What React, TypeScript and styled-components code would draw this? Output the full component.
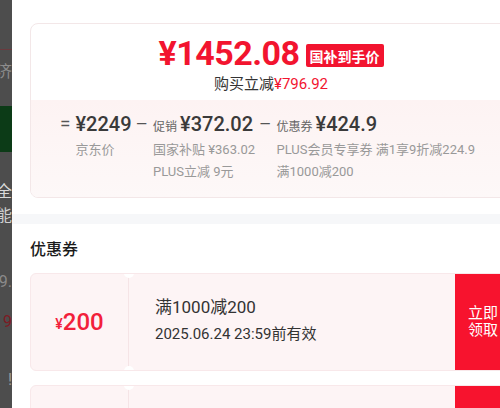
import styled, { createGlobalStyle } from 'styled-components';

const GlobalStyle = createGlobalStyle`
  html, body {
    margin: 0;
    padding: 0;
    background: #ffffff;
    overflow: hidden;
  }
  body {
    font-family: Roboto, "Noto Sans CJK SC", sans-serif;
    color: #333333;
  }
`;

const Screen = styled.div`
  display: flex;
  width: 530px;
  height: 408px;
  overflow: hidden;
`;

/* dimmed product page peeking out behind the sheet */
const Backdrop = styled.div`
  width: 12px;
  flex: none;
  background: #4d4d4d;
  display: flex;
  flex-direction: column;
  overflow: hidden;
`;

const BackRow = styled.div<{ h: number; bg?: string; color?: string; line?: string }>`
  height: ${(p) => p.h}px;
  flex: none;
  display: flex;
  align-items: center;
  justify-content: flex-end;
  background: ${(p) => p.bg || 'transparent'};
  border-bottom: ${(p) => (p.line ? `1px solid ${p.line}` : 'none')};
  color: ${(p) => p.color || '#9a9a9a'};
  font-size: 16px;
  white-space: nowrap;
  overflow: hidden;
`;

const Sheet = styled.div`
  flex: 1;
  min-width: 0;
  background: #ffffff;
  padding-top: 23px;
  display: flex;
  flex-direction: column;

  & > * {
    flex-shrink: 0;
  }
`;

const PriceCard = styled.div`
  margin: 0 18px;
  border: 1px solid #f3e7e8;
  border-radius: 8px;
  overflow: hidden;
`;

const PriceTop = styled.div`
  padding: 9px 0 6px;
  display: flex;
  flex-direction: column;
  align-items: center;
`;

const PriceLine = styled.div`
  display: flex;
  align-items: center;
  height: 40px;
  gap: 6px;
`;

const BigPrice = styled.span`
  font-size: 34px;
  line-height: 40px;
  font-weight: 700;
  color: #f2142f;
  letter-spacing: -0.5px;
`;

const Badge = styled.span`
  margin-top: 5px;
  height: 23px;
  padding: 0 4px;
  display: flex;
  align-items: center;
  border-radius: 2px;
  background: #f2142f;
  color: #ffffff;
  font-size: 14px;
  font-weight: 700;
`;

const SaveLine = styled.div`
  margin-top: 1px;
  font-size: 15px;
  line-height: 20px;
  color: #333333;
`;

const Red = styled.span`
  color: #f2142f;
`;

const Breakdown = styled.div`
  padding: 11px 0 14px 29px;
  display: flex;
  gap: 4px;
  background: linear-gradient(180deg, #fdf3f3 0%, #fdf8f8 100%);
`;

const Col = styled.div`
  display: grid;
  grid-template-columns: auto auto;
  column-gap: 5px;
  align-content: start;
`;

const Op = styled.span`
  font-size: 19px;
  line-height: 26px;
  color: #555555;
`;

const ColBody = styled.div`
  display: flex;
  flex-direction: column;
`;

const ColTitle = styled.div`
  display: flex;
  align-items: baseline;
  gap: 3px;
  height: 28px;
  line-height: 26px;
  font-size: 20px;
  font-weight: 500;
  color: #3a3a3a;
  white-space: nowrap;
`;

const TitleTag = styled.span`
  font-size: 12px;
  font-weight: 400;
  color: #666666;
`;

const Sub = styled.div`
  font-size: 13px;
  line-height: 22px;
  color: #999999;
  white-space: nowrap;
`;

const Band = styled.div`
  margin-top: 16px;
  height: 10px;
  background: #f6f7f9;
`;

const SectionTitle = styled.div`
  padding: 15px 18px 0;
  font-size: 16px;
  line-height: 22px;
  font-weight: 500;
  color: #1a1a1a;
`;

const CouponList = styled.div`
  margin-top: 12px;
  padding: 0 18px;
  display: flex;
  flex-direction: column;
  gap: 14px;
`;

const Coupon = styled.div`
  display: flex;
  height: 96px;
  flex: none;
  border: 1px solid #f8e8ea;
  border-radius: 6px;
  background: #fdf4f5;
  overflow: hidden;
`;

const Stub = styled.div`
  position: relative;
  width: 97px;
  flex: none;
  display: flex;
  align-items: center;
  justify-content: center;
  border-right: 1px solid #f5e4e6;
  color: #f2203a;

  &::before,
  &::after {
    content: '';
    position: absolute;
    right: -6px;
    width: 10px;
    height: 10px;
    border-radius: 50%;
    background: #ffffff;
  }
  &::before {
    top: -6px;
  }
  &::after {
    bottom: -6px;
  }
`;

const Yen = styled.span`
  font-size: 14px;
  font-weight: 500;
  margin-top: 4px;
`;

const Amount = styled.span`
  font-size: 24px;
  font-weight: 500;
`;

const CouponInfo = styled.div`
  flex: 1;
  padding: 21px 0 0 26px;
  display: flex;
  flex-direction: column;
  gap: 4px;
`;

const Cond = styled.div`
  font-size: 17px;
  line-height: 24px;
  color: #333333;
`;

const Expire = styled.div`
  font-size: 15px;
  line-height: 22px;
  color: #333333;
`;

const TakeButton = styled.button`
  width: 56px;
  flex: none;
  border: none;
  padding: 0;
  background: #f7132e;
  color: #ffffff;
  font-family: inherit;
  font-size: 15px;
  line-height: 17px;
  display: flex;
  align-items: center;
  justify-content: center;
  text-align: center;
`;

const breakdown = [
  { op: '=', tag: '', value: '¥2249', subs: ['京东价'] },
  { op: '–', tag: '促销', value: '¥372.02', subs: ['国家补贴 ¥363.02', 'PLUS立减 9元'] },
  { op: '–', tag: '优惠券', value: '¥424.9', subs: ['PLUS会员专享券 满1享9折减224.9', '满1000减200'] },
];

const coupons = [
  { amount: '200', cond: '满1000减200', expire: '2025.06.24 23:59前有效' },
  { amount: '100', cond: '满500减100', expire: '2025.06.24 23:59前有效' },
];

export default function App() {
  return (
    <>
      <GlobalStyle />
      <Screen>
        <Backdrop>
          <BackRow h={49} line="#6a3a3e" />
          <BackRow h={40} color="#8c8c8c">济</BackRow>
          <BackRow h={16} />
          <BackRow h={46} bg="#0c3b17" />
          <BackRow h={26} />
          <BackRow h={24} color="#d9d9d9">全</BackRow>
          <BackRow h={24} color="#cfcfcf">能</BackRow>
          <BackRow h={44} />
          <BackRow h={22} color="#8a8a8a">9.</BackRow>
          <BackRow h={18} />
          <BackRow h={22} color="#7d1b24">9</BackRow>
          <BackRow h={36} />
          <BackRow h={22} color="#9a9a9a">!</BackRow>
        </Backdrop>
        <Sheet>
          <PriceCard>
            <PriceTop>
              <PriceLine>
                <BigPrice>¥1452.08</BigPrice>
                <Badge>国补到手价</Badge>
              </PriceLine>
              <SaveLine>
                购买立减<Red>¥796.92</Red>
              </SaveLine>
            </PriceTop>
            <Breakdown>
              {breakdown.map((c, i) => (
                <Col key={i}>
                  <Op>{c.op}</Op>
                  <ColBody>
                    <ColTitle>
                      {c.tag && <TitleTag>{c.tag}</TitleTag>}
                      {c.value}
                    </ColTitle>
                    {c.subs.map((s) => (
                      <Sub key={s}>{s}</Sub>
                    ))}
                  </ColBody>
                </Col>
              ))}
            </Breakdown>
          </PriceCard>
          <Band />
          <SectionTitle>优惠券</SectionTitle>
          <CouponList>
            {coupons.map((c) => (
              <Coupon key={c.cond}>
                <Stub>
                  <Yen>¥</Yen>
                  <Amount>{c.amount}</Amount>
                </Stub>
                <CouponInfo>
                  <Cond>{c.cond}</Cond>
                  <Expire>{c.expire}</Expire>
                </CouponInfo>
                <TakeButton type="button">
                  立即
                  <br />
                  领取
                </TakeButton>
              </Coupon>
            ))}
          </CouponList>
        </Sheet>
      </Screen>
    </>
  );
}
